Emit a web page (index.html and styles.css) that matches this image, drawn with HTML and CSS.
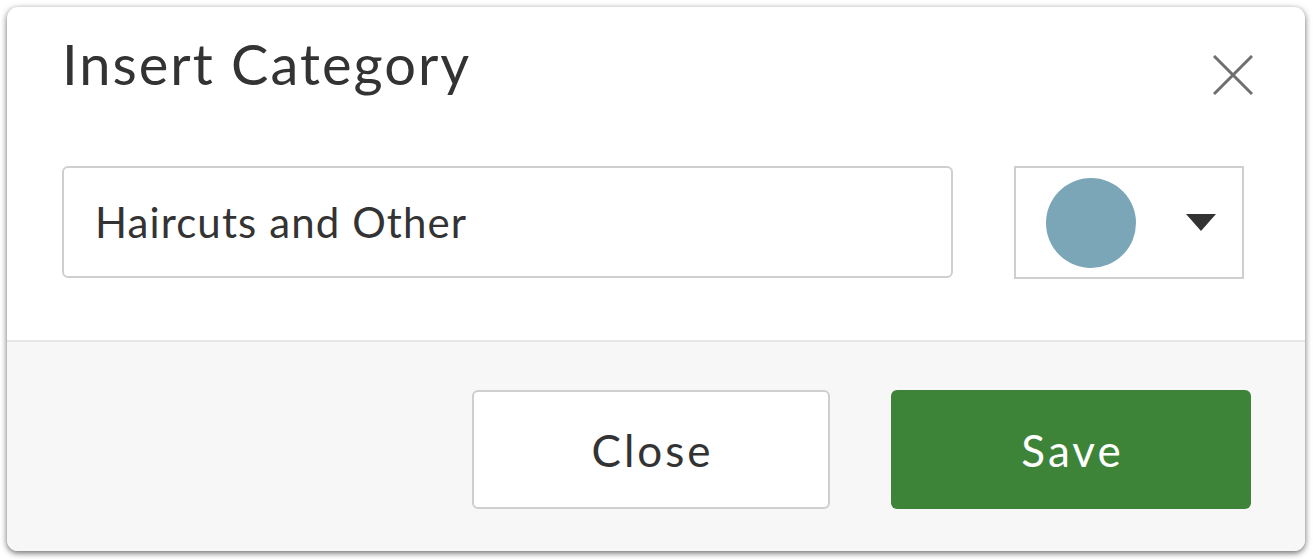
FILE: index.html
```html
<!DOCTYPE html>
<html>
<head>
<meta charset="utf-8">
<link rel="stylesheet" href="styles.css">
</head>
<body>
<div class="dialog">
  <div class="header">
    <h1 class="title">Insert Category</h1>
    <button class="close-x" aria-label="Close">
      <svg width="40" height="40" viewBox="0 0 40 40"><path d="M1 1 L39 39 M39 1 L1 39" stroke="#6f6f6f" stroke-width="3" fill="none"/></svg>
    </button>
  </div>
  <div class="body">
    <div class="input">Haircuts and Other</div>
    <div class="color-picker">
      <span class="swatch"></span>
      <span class="caret"></span>
    </div>
  </div>
  <div class="footer">
    <button class="btn btn-close">Close</button>
    <button class="btn btn-save">Save</button>
  </div>
</div>
</body>
</html>
```
FILE: styles.css
```css
html, body {
  margin: 0;
  padding: 0;
  background: #fff;
}
body {
  padding: 7px 8px 8px 7px;
  font-family: Lato, "Open Sans", sans-serif;
  color: #333;
}
.dialog {
  width: 1298px;
  height: 544px;
  background: #fff;
  border-radius: 11px;
  box-shadow: 0 2px 6px rgba(0, 0, 0, 0.6);
  overflow: hidden;
  display: flex;
  flex-direction: column;
}
.header {
  height: 159px;
  box-sizing: border-box;
  padding: 24px 52px 0 55px;
  display: flex;
  justify-content: space-between;
  align-items: flex-start;
}
.title {
  margin: 0;
  font-size: 56px;
  line-height: 66px;
  font-weight: 400;
  letter-spacing: 2px;
  color: #333;
}
.close-x {
  border: 0;
  background: none;
  padding: 0;
  margin-top: 24px;
  width: 40px;
  height: 40px;
}
.close-x svg { display: block; }
.body {
  display: flex;
  gap: 61px;
  padding: 0 61px 61px 55px;
  border-bottom: 2px solid #e6e6e6;
}
.input {
  flex: 1;
  height: 112px;
  box-sizing: border-box;
  border: 2px solid #cfcfcf;
  border-radius: 6px;
  padding-left: 31px;
  font-size: 42px;
  letter-spacing: 1.1px;
  display: flex;
  align-items: center;
  color: #333;
}
.color-picker {
  width: 230px;
  height: 113px;
  box-sizing: border-box;
  border: 2px solid #cfcfcf;
  display: flex;
  align-items: center;
  padding-left: 30px;
}
.swatch {
  width: 90px;
  height: 90px;
  border-radius: 50%;
  background: #7aa6b8;
}
.caret {
  margin-left: 50px;
  width: 0;
  height: 0;
  border-left: 15px solid transparent;
  border-right: 15px solid transparent;
  border-top: 17px solid #333;
}
.footer {
  flex: 1;
  background: #f7f7f7;
  display: flex;
  justify-content: flex-end;
  gap: 61px;
  padding: 48px 54px 0 0;
  align-items: flex-start;
}
.btn {
  height: 119px;
  border-radius: 6px;
  font-family: Lato, "Open Sans", sans-serif;
  font-size: 44px;
  letter-spacing: 3px;
  padding: 0 0 0 3px;
  cursor: pointer;
}
.btn-close {
  width: 358px;
  background: #fff;
  border: 2px solid #cfcfcf;
  color: #333;
}
.btn-save {
  width: 360px;
  background: #3d8439;
  border: 0;
  color: #fff;
}
```
